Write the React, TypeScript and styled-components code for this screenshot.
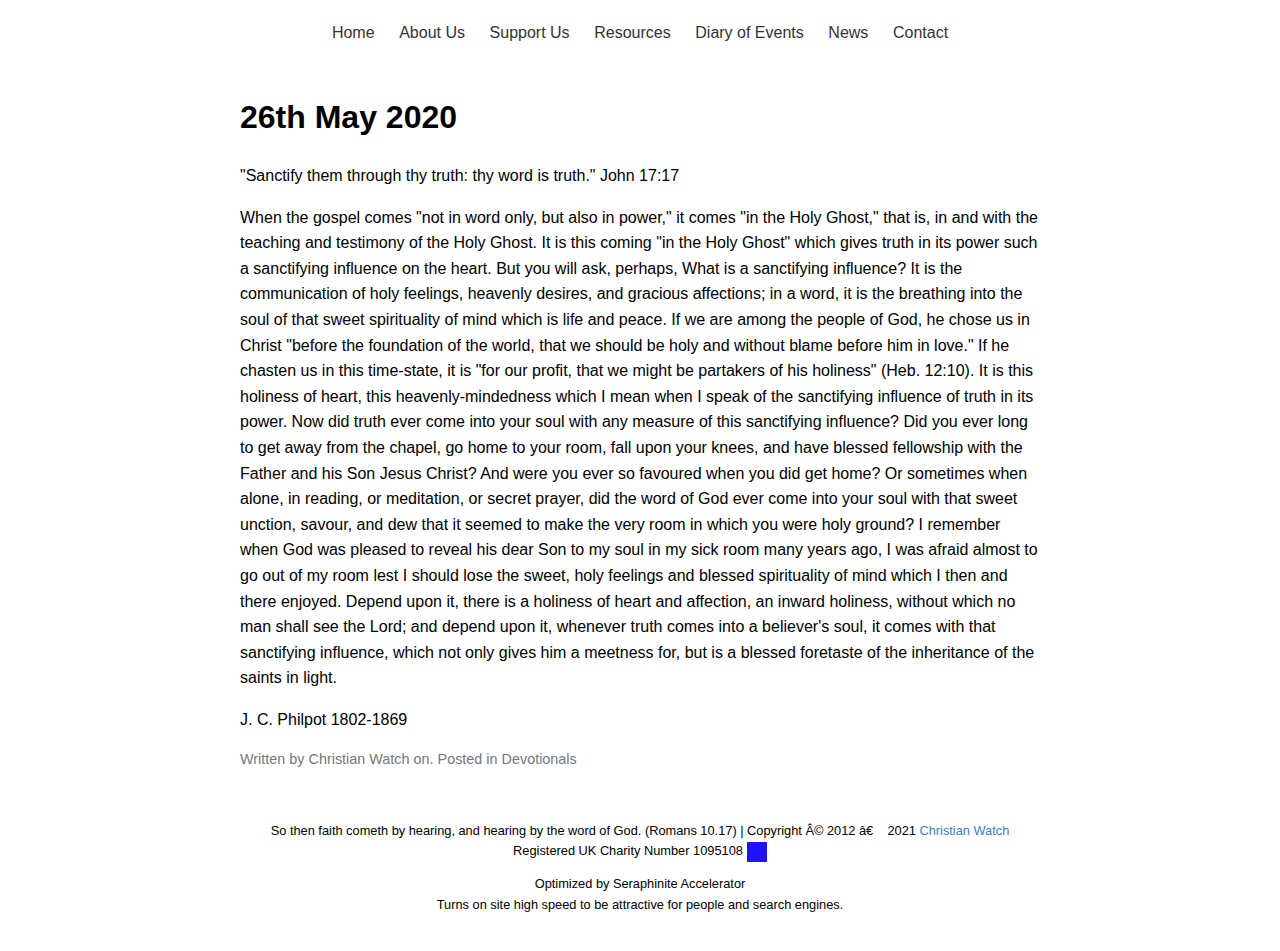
import React from "react";
import styled, { createGlobalStyle } from "styled-components";

const Global = createGlobalStyle`
  html, body { margin: 0; padding: 0; background: #fff; }
  body { font-family: "Liberation Sans", Arial, sans-serif; color: #000; }
`;

const Nav = styled.nav`
  display: flex;
  justify-content: center;
  gap: 24.6px;
  padding: 21px 0 0;
`;

const NavLink = styled.a`
  font-size: 16px;
  line-height: 24px;
  color: #333;
  text-decoration: none;
`;

const Main = styled.main`
  width: 800px;
  margin: 0 auto;
  padding-top: 45px;
`;

const Title = styled.h1`
  font-size: 32px;
  font-weight: bold;
  line-height: 38px;
  margin: 8px 0 27px;
`;

const P = styled.p`
  font-size: 16px;
  line-height: 25.6px;
  margin: 0 0 16px;
`;

const Meta = styled.div`
  font-size: 14.4px;
  line-height: 22.4px;
  color: #777;
`;

const Footer = styled.footer`
  text-align: center;
  font-size: 12.8px;
  padding: 50px 0 20px;
`;

const FooterLine = styled.div<{ $gap?: number }>`
  line-height: 20.5px;
  margin-top: ${(p) => p.$gap ?? 0}px;
`;

const FootLink = styled.a`
  color: #3a7fc8;
  text-decoration: none;
`;

const Badge = styled.span`
  display: inline-block;
  width: 20px;
  height: 20px;
  background: #2212fb;
  vertical-align: middle;
  margin-left: 4px;
`;

const body = `When the gospel comes "not in word only, but also in power," it comes "in the Holy Ghost," that is, in and with the teaching and testimony of the Holy Ghost. It is this coming "in the Holy Ghost" which gives truth in its power such a sanctifying influence on the heart. But you will ask, perhaps, What is a sanctifying influence? It is the communication of holy feelings, heavenly desires, and gracious affections; in a word, it is the breathing into the soul of that sweet spirituality of mind which is life and peace. If we are among the people of God, he chose us in Christ "before the foundation of the world, that we should be holy and without blame before him in love." If he chasten us in this time-state, it is "for our profit, that we might be partakers of his holiness" (Heb. 12:10). It is this holiness of heart, this heavenly-mindedness which I mean when I speak of the sanctifying influence of truth in its power. Now did truth ever come into your soul with any measure of this sanctifying influence? Did you ever long to get away from the chapel, go home to your room, fall upon your knees, and have blessed fellowship with the Father and his Son Jesus Christ? And were you ever so favoured when you did get home? Or sometimes when alone, in reading, or meditation, or secret prayer, did the word of God ever come into your soul with that sweet unction, savour, and dew that it seemed to make the very room in which you were holy ground? I remember when God was pleased to reveal his dear Son to my soul in my sick room many years ago, I was afraid almost to go out of my room lest I should lose the sweet, holy feelings and blessed spirituality of mind which I then and there enjoyed. Depend upon it, there is a holiness of heart and affection, an inward holiness, without which no man shall see the Lord; and depend upon it, whenever truth comes into a believer's soul, it comes with that sanctifying influence, which not only gives him a meetness for, but is a blessed foretaste of the inheritance of the saints in light.`;

const links = ["Home", "About Us", "Support Us", "Resources", "Diary of Events", "News", "Contact"];

export default function App() {
  return (
    <>
      <Global />
      <Nav>
        {links.map((l) => (
          <NavLink key={l} href="#">
            {l}
          </NavLink>
        ))}
      </Nav>
      <Main>
        <Title>26th May 2020</Title>
        <P>"Sanctify them through thy truth: thy word is truth." John 17:17</P>
        <P>{body}</P>
        <P>J. C. Philpot 1802-1869</P>
        <Meta>Written by Christian Watch on. Posted in Devotionals</Meta>
      </Main>
      <Footer>
        <FooterLine>
          So then faith cometh by hearing, and hearing by the word of God. (Romans 10.17) | Copyright Â© 2012 â€{"\u00a0\u00a0\u00a0\u00a0"}2021{" "}
          <FootLink href="#">Christian Watch</FootLink>
        </FooterLine>
        <FooterLine>
          Registered UK Charity Number 1095108
          <Badge />
        </FooterLine>
        <FooterLine $gap={12}>Optimized by Seraphinite Accelerator</FooterLine>
        <FooterLine>Turns on site high speed to be attractive for people and search engines.</FooterLine>
      </Footer>
    </>
  );
}
